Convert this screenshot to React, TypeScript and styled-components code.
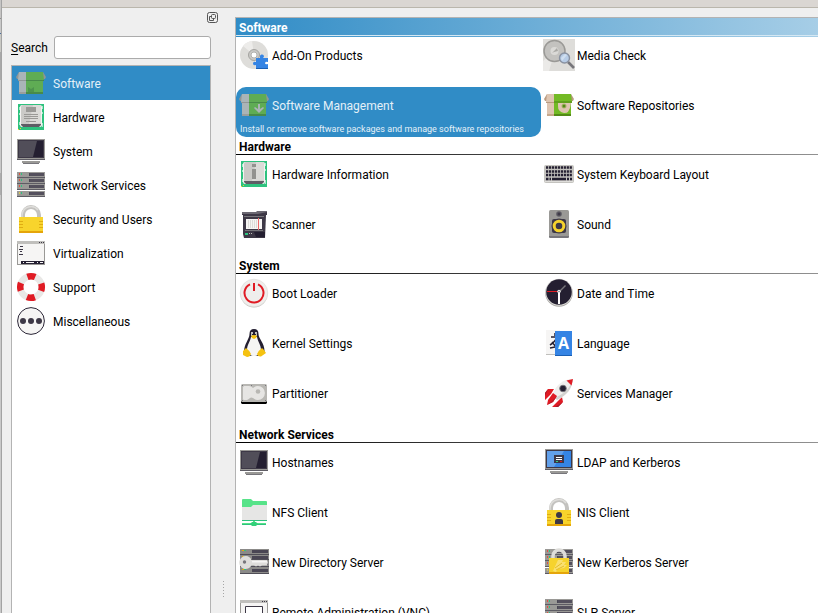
import React, { useState } from 'react';
import styled, { createGlobalStyle, css } from 'styled-components';

const GlobalStyle = createGlobalStyle`
  *, *::before, *::after { box-sizing: border-box; }
  body {
    margin: 0;
    background: #efefef;
    color: #000;
    font-family: Roboto, "Liberation Sans", sans-serif;
    font-size: 12px;
    line-height: 16px;
  }
  button, input { font: inherit; color: inherit; }
`;

const Shell = styled.div`
  display: flex;
  height: 100vh;
  overflow: hidden;
`;

const WindowEdge = styled.div`
  flex: 0 0 2px;
  background: linear-gradient(
    #c6c5c4 0 18px, #8f8f8f 18px 19px, #c9c9c9 19px 33px, #4a6c9c 33px 34px, #c9c9c4 34px 52px,
    #a8a8a8 52px 80px, #c9c9c9 80px 173px, #adadad 173px 195px, #c9c9c9 195px
  );
  border-right: 1px solid #a3a3a3;
`;

const Window = styled.div`
  flex: 1;
  min-width: 0;
  display: flex;
  flex-direction: column;
`;

const TitleEdge = styled.div`
  flex: 0 0 8px;
  background: #dad6d2;
  border-bottom: 1px solid #bab6ac;
`;

const Content = styled.div`
  flex: 1;
  min-height: 0;
  display: flex;
`;

const Sidebar = styled.aside`
  flex: 0 0 217px;
  min-width: 0;
  display: flex;
  flex-direction: column;
`;

const DockBar = styled.div`
  display: flex;
  justify-content: flex-end;
  padding: 4px 1px 0 0;
  height: 28px;
`;

const DockButton = styled.button`
  width: 11px;
  height: 11px;
  padding: 0;
  border: 0;
  background: none;
  line-height: 0;
`;

const SearchRow = styled.form`
  display: flex;
  align-items: center;
  gap: 6px;
  margin: 0 8px 6px 9px;
`;

const SearchLabel = styled.label`
  u { text-underline-offset: 2px; }
`;

const SearchInput = styled.input`
  flex: 1;
  width: 100%;
  min-width: 0;
  height: 23px;
  padding: 0 5px;
  background: #fff;
  border: 1px solid #ababab;
  border-radius: 3px;
  outline: none;
`;

const GroupList = styled.nav`
  flex: 1;
  min-height: 0;
  margin: 0 8px 0 9px;
  overflow: hidden;
  background: #fff;
  border: 1px solid #b3b3b3;
  border-bottom: 0;
`;

const selectedColors = css`
  background: #308cc6;
  color: #e4f0f8;
  svg { opacity: 0.7; }
`;

const GroupButton = styled.button<{ $selected: boolean }>`
  display: flex;
  align-items: center;
  gap: 6px;
  width: 100%;
  height: 34px;
  padding: 0 3px;
  border: 0;
  background: none;
  text-align: left;
  ${p => p.$selected && selectedColors}
`;

const Splitter = styled.div`
  flex: 0 0 16px;
  display: flex;
  flex-direction: column;
  justify-content: flex-end;
  padding: 0 0 15px 4px;
`;

const Grip = styled.div`
  width: 1px;
  height: 17px;
  background: repeating-linear-gradient(#a5a5a5 0 1px, transparent 1px 3px);
`;

const Panel = styled.main`
  flex: 1;
  min-width: 0;
  margin-top: 9px;
  overflow: hidden;
  background: #fff;
  border-top: 1px solid #b3b3b3;
  border-left: 1px solid #b3b3b3;
`;

const SectionTitle = styled.h2<{ $active: boolean }>`
  height: 19px;
  margin: 0;
  padding: 2px 3px 0;
  font-size: 12px;
  line-height: 16px;
  font-weight: 700;
  background: linear-gradient(90deg, #000, #fff 175%) 0 17px / 100% 1px no-repeat;
  ${p => p.$active && css`
    color: #fff;
    background:
      linear-gradient(#d5e8f3, #d5e8f3) 0 17px / 100% 1px no-repeat,
      linear-gradient(90deg, #308cc6, #fff 175%);
  `}
`;

const ItemGrid = styled.div`
  display: grid;
  grid-template-columns: repeat(2, 305px);
  grid-auto-rows: 50px;
`;

const ItemButton = styled.button<{ $selected: boolean }>`
  display: flex;
  flex-direction: column;
  padding: 2px 2px 0;
  border: 0;
  border-radius: 10px;
  background: none;
  text-align: left;
  ${p => p.$selected && selectedColors}
`;

const ItemHead = styled.span`
  display: flex;
  align-items: center;
  gap: 2px;
`;

const Caption = styled.span`
  padding-top: 2px;
  white-space: nowrap;
`;

const ItemNote = styled.span`
  padding-left: 2px;
  font-size: 9px;
  line-height: 16px;
  white-space: nowrap;
`;

const Glyph = styled.svg`
  display: block;
  flex: none;
  width: 32px;
  height: 32px;
`;

const Box = ({ light = '#dec5b1', shade = '#c7a78b' }: { light?: string; shade?: string }) => (
  <>
    <path d="M4 5 1 10l1 2h3z" fill="#b99b82" />
    <path d="M28 5l3 5-1 2h-3z" fill="#b99b82" />
    <path d="M4 13h7v14H4z" fill={light} />
    <path d="M11 13h17v14H11z" fill="#73ba25" />
    <path d="M4 25h7v2H4z" fill={shade} />
    <path d="M11 25h17v2H11z" fill="#538a17" />
    <path d="M4 5h7v8H3z" fill={light} />
    <path d="M11 5h17l1 8H11z" fill="#73ba25" />
    <path d="M3 13h8v1H3z" fill="#b99b82" />
    <path d="M11 13h18v1H11z" fill="#538a17" />
  </>
);

const Board = () => (
  <>
    <path d="M3 3h26v26H3z" fill="#2ec27e" />
    <path d="M4 6h1v3H4zM4 12h1v2H4zM4 21h1v3H4zM27 5h1v3h-1zM27 11h1v2h-1zM27 22h1v4h-1z" fill="#a8e8cb" />
    <path d="M3 28h1v1H3zM5 27h1v1H5z" fill="#f6d32d" />
    <rect x="5" y="4" width="22" height="22" rx="2" fill="#f3f2f1" />
    <rect x="6" y="4" width="20" height="20" rx="2" fill="#cbcac7" />
    <path d="M18 4h6q2 0 2 2v16l-12 1z" fill="#dcdbd8" />
    <path d="M6 23h20v1l-2 2H8l-2-2z" fill="#5e5c64" />
  </>
);

const Monitor = ({ blue = false }: { blue?: boolean }) => (
  <>
    <path d="M2 4h28v21H2z" fill="#9a9996" />
    <path d="M2 24h28v1H2z" fill="#5e5c64" />
    <path d="M3 5h26v18H3z" fill="#3d3846" />
    <path d="M4 6h24v16H4z" fill={blue ? '#62a0ea' : '#514e59'} />
    <path d={blue ? 'M21 6h7v16H11z' : 'M22 6h6v16H18z'} fill={blue ? '#3584e4' : '#241f31'} />
    <path d="M7 26h18v2H7z" fill="#9a9996" />
    <path d="M8 28h16v1H8z" fill="#77767b" />
  </>
);

const Rack = () => (
  <>
    {[3, 9, 15, 22].map(y => (
      <g key={y}>
        <path d={`M2 ${y}h28v5H2z`} fill="#9a9996" />
        <path d={`M2 ${y + 5}h28v1H2z`} fill="#5e5c64" />
        <path d={`M14 ${y + 1}h15v3H14z`} fill="#4a4654" />
        <path d={`M16 ${y + 1}v3M18 ${y + 1}v3M20 ${y + 1}v3M22 ${y + 1}v3M24 ${y + 1}v3M26 ${y + 1}v3M28 ${y + 1}v3`} stroke="#6b6872" strokeWidth=".6" />
        <path d={`M4 ${y + 1}h1v2H4z`} fill={y % 2 ? '#e0503c' : '#d6c454'} />
        <path d={`M6 ${y + 1}h1v2H6z`} fill="#2ec27e" />
      </g>
    ))}
  </>
);

const BigRack = () => (
  <>
    <path d="M2 3h29v25H2z" fill="#8b8a88" />
    {[8, 13, 20, 27].map(y => (
      <path key={y} d={`M2 ${y}h29v1H2z`} fill="#504e57" />
    ))}
    {[4, 10, 16, 23].map(y => (
      <g key={y}>
        <path d={`M14 ${y}h16v3H14z`} fill="#4a4654" />
        <path d={`M4 ${y}h2v1H4z`} fill="#e5a50a" />
        <path d={`M6 ${y}h2v1H6z`} fill="#2ec27e" />
      </g>
    ))}
  </>
);

const Padlock = () => (
  <>
    <path d="M8 17v-5a8 8 0 0 1 16 0v5" fill="none" stroke="#c3c2bf" strokeWidth="4" />
    <path d="M7 16v-4a9 9 0 0 1 16-5" fill="none" stroke="#deddda" strokeWidth="1.5" />
    <path d="M4 14h24v16H4z" fill="#f8d42c" />
    <path d="M4 28h24v2H4z" fill="#e5a50a" />
    <path d="M4 18.500h4M4 21.500h4M4 24.500h4M24 18.500h4M24 21.500h4M24 24.500h4" stroke="#e0ad12" />
  </>
);

const AppWindow = () => (
  <>
    <path d="M2 4h28v24H2z" fill="#9a9996" />
    <path d="M3 7h26v20H3z" fill="#f6f5f4" />
    <path d="M2 4h28v3H2z" fill="#c0bfbc" />
    <path d="M24 5h1v1h-1zM26 5h1v1h-1zM28 5h1v1h-1z" fill="#3d3846" />
  </>
);

const drawings = {
  software: <><Box /><path d="M13 25v-5l3 2 3-2v5z" fill="#538a17" opacity=".7" /></>,
  management: <><Box /><path d="M20 15h2v5l3-2 1 1-5 5-5-5 1-1 3 2z" fill="#dec5b1" /></>,
  repositories: (
    <>
      <Box />
      <path d="M15 14h13v4a6.500 6.500 0 1 1-13-1z" fill="#dec5b1" />
      <path d="M28 14v11h-4l3-6z" fill="#73ba25" />
      <circle cx="21" cy="17" r="2.500" fill="#a8b56a" />
      <circle cx="21" cy="17" r="1.500" fill="#538a17" />
      <path d="M11 12h18v2H11z" fill="#61a01d" />
    </>
  ),
  hardware: (
    <><Board /><path d="M11 6h10v5H11z" fill="#9a9996" /><path d="M9 13.500h14M9 15.500h14M9 17.500h14M11 20.500h10" stroke="#9a9996" /></>
  ),
  hardwareInfo: <><Board /><path d="M14 6h4v3h-4zM14 11h4v10h-4z" fill="#93928f" /></>,
  monitor: <Monitor />,
  rack: <Rack />,
  lock: <Padlock />,
  virtualization: (
    <>
      <AppWindow />
      <path d="M5 9.500h3M4 12.500h4M5 14.500h2M4 17.500h4" stroke="#3d3846" />
      <path d="M6 24h23v3H6z" fill="#241f31" />
      <path d="M8 25.500h1M11 25.500h8M22 25.500h1M25 25.500h3" stroke="#f6f5f4" />
    </>
  ),
  support: (
    <>
      <circle cx="16" cy="16" r="10.800" fill="none" stroke="#e9e8e6" strokeWidth="6.500" />
      <circle cx="16" cy="16" r="10.800" fill="none" stroke="#e01b24" strokeWidth="6.500" strokeDasharray="7.960 9" strokeDashoffset="3.980" />
    </>
  ),
  misc: (
    <>
      <circle cx="16" cy="16" r="13.400" fill="#f6f5f4" stroke="#2c2738" />
      <g fill="#3d3846"><circle cx="8" cy="16" r="3" /><circle cx="16" cy="16" r="3" /><circle cx="24" cy="16" r="3" /></g>
    </>
  ),
  addon: (
    <>
      <circle cx="16" cy="16" r="14" fill="#deddda" />
      <path d="M16 16 5 7A14 14 0 0 1 14 2zM16 16l9 10a14 14 0 0 1-7 4z" fill="#edecea" />
      <circle cx="16" cy="16" r="5.500" fill="#c9c8c5" stroke="#a4a3a0" />
      <circle cx="16" cy="16" r="3" fill="#fff" stroke="#b3b2af" />
      <path d="M18 19h4v-1a2 2 0 1 1 4-1q0 1-1 2h5v4q-3-1-3 1t3 1v5H18v-4q-3 1-3-1.500t3-1.500z" fill="#3584e4" />
      <path d="M18 29h12v1H18z" fill="#1a5fb4" />
    </>
  ),
  media: (
    <>
      <path d="M0 0h32v32H0z" fill="#deddda" />
      <path d="M0 22 12 12 6 32H0z" fill="#ebeae8" />
      <circle cx="11.500" cy="12" r="10.500" fill="#c3c2bf" stroke="#9a9996" strokeWidth="1.500" />
      <circle cx="11.500" cy="12" r="4" fill="#dbdad7" />
      <path d="M9 14l5-5 1 3-4 1z" fill="#aaa9a5" />
      <path d="m25 23 6 6" stroke="#77767b" strokeWidth="2.600" />
      <circle cx="21.500" cy="19" r="5" fill="#b7cce6" stroke="#8991a0" strokeWidth="1.400" />
      <path d="m18 19 4-4 2 1-5 6z" fill="#d0dff0" />
    </>
  ),
  keyboard: (
    <>
      <rect x="1" y="7" width="30" height="18" rx="2" fill="#c4c3bf" />
      <path d="M2 23.500h28" stroke="#deddda" />
      <path d="M3 9.500h26M3 13.500h26M3 17h26" stroke="#241f31" strokeWidth="2.400" strokeDasharray="2.200 .760" />
      <path d="M3 21h2.500M6.500 21H8M9 21h14M24 21h2M27 21h2" stroke="#241f31" strokeWidth="2.400" />
    </>
  ),
  scanner: (
    <>
      <path d="M4 4h14l2-1h9v4H4z" fill="#3d3846" />
      <path d="M4 4h14l2-1h9v1l-9 2H4z" fill="#6b6872" />
      <path d="M5 7h23l-1 23H6L5 26z" fill="#3d3846" />
      <path d="M6 8h20v1H6zM7 22h18v1H7z" fill="#77767b" />
      <path d="M8 11h16v10H8z" fill="#f6f5f4" />
      <path d="M10.500 12v8M12.500 12v8M14.500 12v8M16.500 12v8M18.500 12v8" stroke="#dddcd9" />
      <path d="M20.500 10v12" stroke="#ee6a6a" />
      <path d="M7 25h3v2H7z" fill="#2ec27e" />
      <path d="M11 25h1v1h-1zM13 25h1v1h-1z" fill="#c0bfbc" />
      <path d="M16 24h11v5H18z" fill="#241f31" />
    </>
  ),
  sound: (
    <>
      <rect x="6" y="2" width="20" height="28" rx="1.500" fill="#9a9996" />
      <path d="M6 28h20v1l-1 1H7l-1-1z" fill="#77767b" />
      <circle cx="16" cy="6" r="2.800" fill="#5e5c64" /><circle cx="16" cy="6" r="1.500" fill="#3d3846" />
      <rect x="9" y="11" width="14" height="14" rx="2" fill="#3d3846" />
      <circle cx="16" cy="18" r="7.500" fill="#3d3846" />
      <circle cx="16" cy="18" r="4.800" fill="none" stroke="#f6d32d" strokeWidth="3" />
      <circle cx="16" cy="18" r="2.500" fill="#3d3846" />
    </>
  ),
  boot: (
    <>
      <circle cx="16" cy="17" r="13.500" fill="#c0bfbc" /><circle cx="16" cy="16" r="13.800" fill="#efeeec" stroke="#dcdbd8" strokeWidth=".6" />
      <path d="M12 7.300a9.500 9.500 0 1 0 8 0" fill="none" stroke="#e01b24" strokeWidth="2" />
      <path d="M16 6v8" stroke="#e01b24" strokeWidth="2" />
    </>
  ),
  tux: (
    <>
      <path d="M16 2q4.500 0 4.500 5c0 5 6.500 9 6 18l-5 4H11l-5-4C6 17 11.500 12 11.500 7q0-5 4.500-5z" fill="#241f31" />
      <path d="M13 10h6c1 5 4 8 4 13 0 4-4 6-7 6s-7-2-7-6c0-5 3-8 4-13z" fill="#f6f5f4" />
      <path d="M13 5h2v4h-2zM17 5h2v4h-2z" fill="#c0bfbc" />
      <path d="M14 7h1v1h-1zM17 7h1v1h-1z" fill="#241f31" />
      <path d="M13 9q3-2 6 0l-1 2-2 1-2-1z" fill="#f5c211" />
      <path d="M8 21q3 2 5 6-1 3-4 3l-4-2V24zM24 21q-3 2-5 6 1 3 4 2.500l5-3.500-2-3z" fill="#f5c211" />
    </>
  ),
  disk: (
    <>
      <path d="M3 24h26v2l-1 1H4l-1-1z" fill="#000" />
      <rect x="3" y="7" width="26" height="18" rx="1.500" fill="#b8b7b3" />
      <path d="M6 9h5q2 0 4 2a7 7 0 1 1 0 10q-2-1-3 0t-3 2H6q-1 0-1-1V10z" fill="#e6e5e3" />
      <circle cx="20" cy="14.500" r="2.300" fill="#b8b7b3" />
      <path d="M4 8h1v1H4zM13 8h1v1h-1zM27 8h1v1h-1zM4 23h1v1H4zM27 23h1v1h-1z" fill="#77767b" />
    </>
  ),
  clock: (
    <>
      <circle cx="16" cy="16" r="13.800" fill="#a9a8a5" />
      <circle cx="16" cy="15.300" r="13.500" fill="#deddda" />
      <circle cx="16" cy="15" r="12.800" fill="#241f31" />
      <path d="m16 15 6.500-6.500" stroke="#77767b" strokeWidth="1.500" />
      <path d="M4 14.500h12" stroke="#e01b24" />
      <path d="M16 15v12" stroke="#fff" strokeWidth="2" />
      <circle cx="16" cy="14.500" r="1.700" fill="#f6f5f4" />
      <circle cx="16" cy="14.500" r=".7" fill="#5e5c64" />
    </>
  ),
  language: (
    <>
      <path d="M3 3h14v24H3z" fill="#f6f5f4" /><path d="M3 27h14v1H3z" fill="#c0bfbc" />
      <path d="M12 6v3M8 10h6q-2 5-7 8M9 15l4 5M7 21l5-1" fill="none" stroke="#241f31" strokeWidth="1.500" />
      <path d="M12 4h17v25H12z" fill="#3584e4" /><path d="M12 28h17v1H12z" fill="#1a5fb4" />
      <text x="20.500" y="22" textAnchor="middle" fontFamily="Open Sans, sans-serif" fontWeight="700" fontSize="16" fill="#fff">A</text>
    </>
  ),
  rocket: (
    <>
      <path d="M11 12 5 12 2 16v7l6-6zM19 20l1 5-5 5H9l6-6z" fill="#e01b24" />
      <path d="M5 12 2 16v3zM20 25l-5 5h-3z" fill="#a51d2d" />
      <path d="M30 2C20 2 14 7 9 18l5 5C24 18 29 12 30 2z" fill="#f0efed" />
      <path d="M30 2c-1 10-6 16-16 21l-2-2C22 16 27 11 30 2z" fill="#d3d2cf" />
      <path d="M30 2l-6.500 1.500 5 5z" fill="#e01b24" />
      <path d="m10 16 4 3-4 6-6 3 1-5z" fill="#e01b24" />
      <path d="m14 19-4 6-6 3z" fill="#c01c28" />
      <circle cx="20" cy="11.500" r="3.300" fill="#241f31" stroke="#77767b" strokeWidth=".9" />
    </>
  ),
  nfs: (
    <>
      <path d="M4 4q0-1 1-1h8l2 2h13q1 0 1 1v8H4z" fill="#57e389" />
      <path d="M4 11h9l2-2h14v15H4z" fill="#e6e6e5" />
      <path d="M4 24h25v1H4z" fill="#2ec27e" />
      <path d="M15 25h2v2h-2zM4 27h24v2H4z" fill="#57e389" />
      <path d="M4 28.500h24" stroke="#2ec27e" />
      <path d="M12 28l2-2h4l2 2-2 2h-4z" fill="#33d17a" />
    </>
  ),
  directory: (
    <>
      <BigRack />
      <path d="M8 10a6.500 6.500 0 1 0 5.500 9.500H16l2 1 2-1 2 1 2-1h5l1-3-1-2.500H13.500A6.500 6.500 0 0 0 8 10z" fill="#deddda" />
      <path d="M14 15h15v1.500H14z" fill="#f6f5f4" />
      <circle cx="6.500" cy="16" r="1.700" fill="#77767b" />
    </>
  ),
  remote: <><AppWindow /><path d="M7.500 10.500h17v13h-17z" fill="#fff" stroke="#3d3846" /></>,
  ldap: (
    <g transform="translate(0 -1)">
      <Monitor blue />
      <path d="M11 10h10v8H11z" fill="#3d3846" />
      <path d="M13 12.500h6M13 14.500h6" stroke="#fff" />
      <path d="M13 16h2v1h-2z" fill="#33d17a" /><path d="M17 16h2v1h-2z" fill="#e01b24" />
    </g>
  ),
  nis: <><Padlock /><circle cx="16" cy="19" r="3" fill="#3d3846" /><path d="M12 28v-3q0-2 2-2h4q2 0 2 2v3z" fill="#3d3846" /></>,
  kerberos: (
    <>
      <Rack />
      <path d="M10 13v-3a6 6 0 0 1 12 0v3" fill="none" stroke="#deddda" strokeWidth="3.500" />
      <path d="M6 12h20v16H6z" fill="#f6d32d" /><path d="M6 26h20v2H6z" fill="#e5a50a" />
      <path d="m10 25 5-11h5l-1 2h4l-2 3h3l-3 3-6 1-2 3z" fill="#f9e070" /><path d="m12 22 7-5M13 24l8-4" stroke="#e5bd25" />
    </>
  ),
};

type IconName = keyof typeof drawings;

const Icon = ({ name }: { name: IconName }) => (
  <Glyph viewBox="0 0 32 32" aria-hidden="true">{drawings[name]}</Glyph>
);

const groups: { label: string; icon: IconName }[] = [
  { label: 'Software', icon: 'software' },
  { label: 'Hardware', icon: 'hardware' },
  { label: 'System', icon: 'monitor' },
  { label: 'Network Services', icon: 'rack' },
  { label: 'Security and Users', icon: 'lock' },
  { label: 'Virtualization', icon: 'virtualization' },
  { label: 'Support', icon: 'support' },
  { label: 'Miscellaneous', icon: 'misc' },
];

const sections: { title: string; items: { label: string; icon: IconName; note?: string }[] }[] = [
  {
    title: 'Software',
    items: [
      { label: 'Add-On Products', icon: 'addon' },
      { label: 'Media Check', icon: 'media' },
      { label: 'Software Management', icon: 'management', note: 'Install or remove software packages and manage software repositories' },
      { label: 'Software Repositories', icon: 'repositories' },
    ],
  },
  {
    title: 'Hardware',
    items: [
      { label: 'Hardware Information', icon: 'hardwareInfo' },
      { label: 'System Keyboard Layout', icon: 'keyboard' },
      { label: 'Scanner', icon: 'scanner' },
      { label: 'Sound', icon: 'sound' },
    ],
  },
  {
    title: 'System',
    items: [
      { label: 'Boot Loader', icon: 'boot' },
      { label: 'Date and Time', icon: 'clock' },
      { label: 'Kernel Settings', icon: 'tux' },
      { label: 'Language', icon: 'language' },
      { label: 'Partitioner', icon: 'disk' },
      { label: 'Services Manager', icon: 'rocket' },
    ],
  },
  {
    title: 'Network Services',
    items: [
      { label: 'Hostnames', icon: 'monitor' },
      { label: 'LDAP and Kerberos', icon: 'ldap' },
      { label: 'NFS Client', icon: 'nfs' },
      { label: 'NIS Client', icon: 'nis' },
      { label: 'New Directory Server', icon: 'directory' },
      { label: 'New Kerberos Server', icon: 'kerberos' },
      { label: 'Remote Administration (VNC)', icon: 'remote' },
      { label: 'SLP Server', icon: 'rack' },
    ],
  },
];

export default function App() {
  const [group, setGroup] = useState('Software');
  const [item, setItem] = useState('Software Management');

  return (
    <>
      <GlobalStyle />
      <Shell>
        <WindowEdge />
        <Window>
          <TitleEdge />
          <Content>
            <Sidebar>
              <DockBar>
                <DockButton type="button" aria-label="Float panel">
                  <svg width="11" height="11" viewBox="0 0 11 11" fill="none" stroke="#555">
                    <rect x=".5" y=".5" width="10" height="10" rx="2" />
                    <rect x="4.500" y="2.500" width="4" height="4" rx="1" />
                    <path d="M4.500 4.500h-2v4h4v-2" />
                  </svg>
                </DockButton>
              </DockBar>
              <SearchRow onSubmit={e => e.preventDefault()}>
                <SearchLabel htmlFor="search"><u>S</u>earch</SearchLabel>
                <SearchInput id="search" type="text" accessKey="s" />
              </SearchRow>
              <GroupList aria-label="Groups">
                {groups.map(g => (
                  <GroupButton key={g.label} type="button" $selected={g.label === group} onClick={() => setGroup(g.label)}>
                    <Icon name={g.icon} />
                    <Caption>{g.label}</Caption>
                  </GroupButton>
                ))}
              </GroupList>
            </Sidebar>
            <Splitter><Grip /></Splitter>
            <Panel>
              {sections.map(section => (
                <section key={section.title}>
                  <SectionTitle $active={section.title === group}>{section.title}</SectionTitle>
                  <ItemGrid>
                    {section.items.map(entry => (
                      <ItemButton key={entry.label} type="button" $selected={entry.label === item} onClick={() => setItem(entry.label)}>
                        <ItemHead>
                          <Icon name={entry.icon} />
                          <Caption>{entry.label}</Caption>
                        </ItemHead>
                        {entry.label === item && entry.note && <ItemNote>{entry.note}</ItemNote>}
                      </ItemButton>
                    ))}
                  </ItemGrid>
                </section>
              ))}
            </Panel>
          </Content>
        </Window>
      </Shell>
    </>
  );
}
